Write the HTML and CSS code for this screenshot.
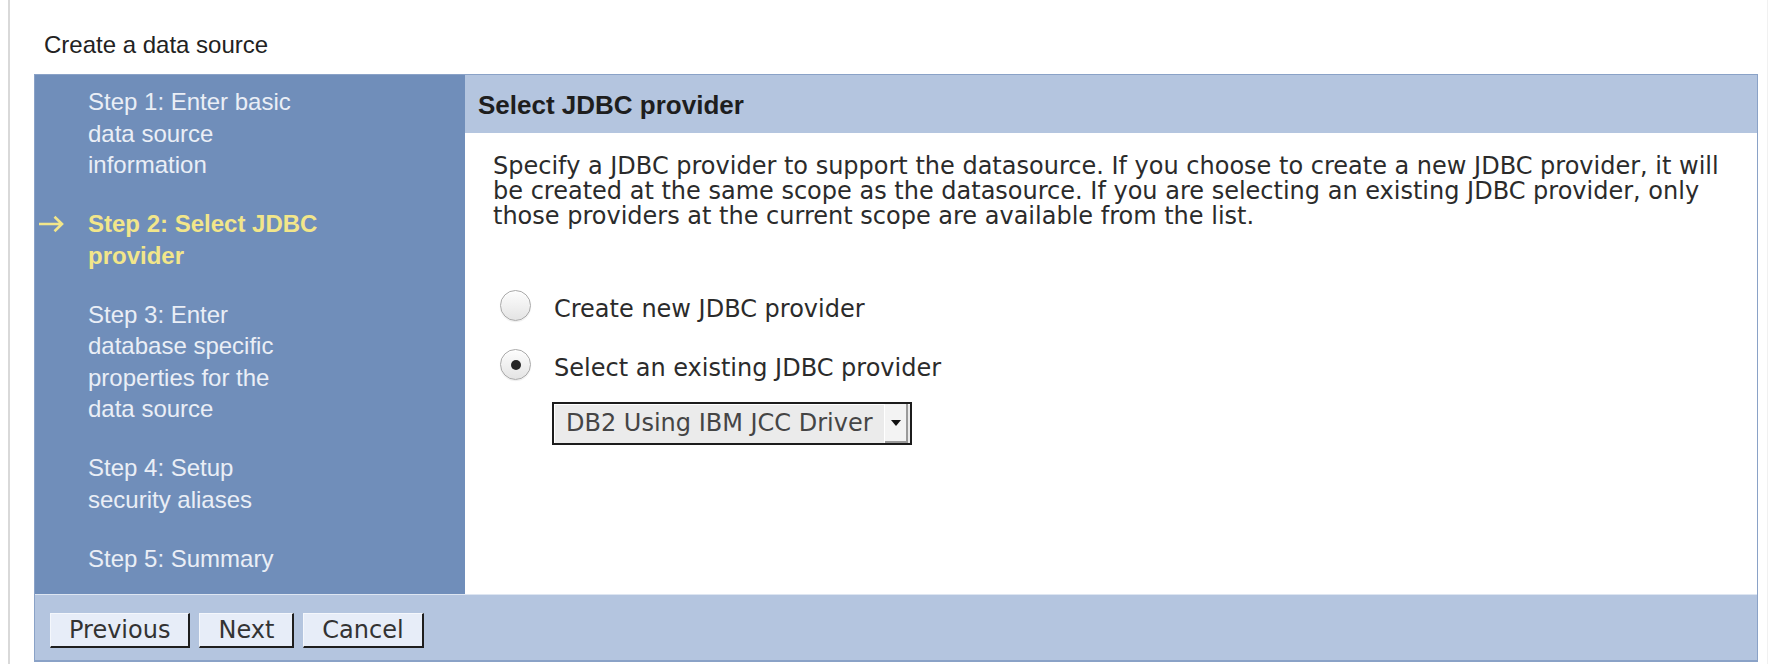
FILE: index.html
```html
<!DOCTYPE html>
<html lang="en">
<head>
<meta charset="utf-8">
<title>Create a data source</title>
<link rel="stylesheet" href="styles.css">
</head>
<body>
<div class="page">
  <div class="title">Create a data source</div>
  <div class="wizard">
    <div class="steps">
      <div class="step">
        <span class="marker"></span>
        <span class="step-text">Step 1: Enter basic data source information</span>
      </div>
      <div class="step active">
        <span class="marker">
          <svg class="arrow" width="26" height="18" viewBox="0 0 26 18"><path d="M1 9H24M16.5 1.8L24 9L16.5 16.2" fill="none" stroke="currentColor" stroke-width="2.6"/></svg>
        </span>
        <span class="step-text">Step 2: Select JDBC provider</span>
      </div>
      <div class="step">
        <span class="marker"></span>
        <span class="step-text">Step 3: Enter database specific properties for the data source</span>
      </div>
      <div class="step">
        <span class="marker"></span>
        <span class="step-text">Step 4: Setup security aliases</span>
      </div>
      <div class="step">
        <span class="marker"></span>
        <span class="step-text">Step 5: Summary</span>
      </div>
    </div>
    <div class="main">
      <div class="main-head">Select JDBC provider</div>
      <div class="main-body">
        <p class="desc">Specify a JDBC provider to support the datasource. If you choose to create a new JDBC provider, it will be created at the same scope as the datasource. If you are selecting an existing JDBC provider, only those providers at the current scope are available from the list.</p>
        <div class="option">
          <span class="radio"></span>
          <span class="option-label">Create new JDBC provider</span>
        </div>
        <div class="option second">
          <span class="radio checked"></span>
          <span class="option-label">Select an existing JDBC provider</span>
        </div>
        <div class="select">
          <span class="select-value">DB2 Using IBM JCC Driver</span>
          <span class="select-btn"><span class="tri"></span></span>
        </div>
      </div>
    </div>
    <div class="footer">
      <button class="btn" type="button">Previous</button>
      <button class="btn" type="button">Next</button>
      <button class="btn" type="button">Cancel</button>
    </div>
  </div>
</div>
</body>
</html>
```
FILE: styles.css
```css
html, body {
  margin: 0;
  padding: 0;
  background: #ffffff;
}

.page {
  margin: 0 8px;
  min-height: 664px;
  box-sizing: border-box;
  border-left: 2px solid #d9d9d9;
  border-right: 1px solid #f1f1f1;
  padding: 31px 9px 0 24px;
}

.title {
  font-family: "Liberation Sans", Arial, sans-serif;
  font-size: 24px;
  line-height: 28px;
  color: #222222;
  padding-left: 10px;
  margin-bottom: 15px;
}

.wizard {
  display: grid;
  grid-template-columns: 430px 1fr;
  border: 1px solid #8aa2c7;
  border-bottom-width: 2px;
}

.steps {
  background: #708eba;
  padding: 11px 0 20px 0;
  font-family: "Liberation Sans", Arial, sans-serif;
  font-size: 24px;
  line-height: 31.5px;
  color: #eaeef6;
}

.step {
  display: grid;
  grid-template-columns: 53px 231px;
  margin-bottom: 27.5px;
}

.step:last-child {
  margin-bottom: 0;
}

.step.active {
  color: #f2e68a;
  font-weight: bold;
}

.marker {
  display: block;
}

.arrow {
  display: block;
  margin: 7px 0 0 3px;
  color: #f2e68a;
}

.main {
  display: flex;
  flex-direction: column;
  background: #ffffff;
}

.main-head {
  background: #b4c5df;
  height: 58px;
  box-sizing: border-box;
  padding: 2px 0 0 13px;
  font-family: "Liberation Sans", Arial, sans-serif;
  font-weight: bold;
  font-size: 26px;
  line-height: 56px;
  color: #1e1e1e;
}

.main-body {
  padding: 21px 14px 0 28px;
  font-family: "DejaVu Sans", sans-serif;
  font-size: 24px;
  color: #2b2b2b;
}

.desc {
  margin: 0 0 57px 0;
  line-height: 25px;
}

.option {
  display: flex;
  align-items: flex-start;
  padding-left: 7px;
}

.option.second {
  margin-top: 16px;
}

.radio {
  width: 31px;
  height: 31px;
  box-sizing: border-box;
  margin-top: 4px;
  margin-right: 23px;
  border-radius: 50%;
  border: 1px solid #a9a9a9;
  background: linear-gradient(#fdfdfd, #e4e4e4);
  box-shadow: inset 0 1px 1px rgba(255, 255, 255, 0.9), 0 1px 1px rgba(0, 0, 0, 0.08);
  display: flex;
  align-items: center;
  justify-content: center;
}

.radio.checked::after {
  content: "";
  width: 10px;
  height: 10px;
  border-radius: 50%;
  background: #262626;
}

.option-label {
  line-height: 40px;
  padding-top: 3px;
}

.select {
  display: flex;
  width: 360px;
  height: 43px;
  box-sizing: border-box;
  margin: 14px 0 0 59px;
  border: 2px solid #1c1c1c;
  background: #ebebeb;
  box-shadow: inset 1px 1px 0 #ffffff;
}

.select-value {
  flex: 1;
  padding-left: 12px;
  line-height: 39px;
  color: #454545;
  white-space: nowrap;
}

.select-btn {
  width: 23px;
  margin: 0 2px 0 0;
  background: #f3f3f3;
  border-left: 1px solid #ffffff;
  box-shadow: inset -2px -2px 0 #9a9a9a;
  display: flex;
  align-items: center;
  justify-content: center;
}

.tri {
  width: 0;
  height: 0;
  border-left: 5px solid transparent;
  border-right: 5px solid transparent;
  border-top: 6px solid #111111;
  margin: 0 2px 2px 0;
}

.footer {
  grid-column: 1 / -1;
  display: flex;
  gap: 9px;
  background: #b4c5df;
  border-top: 1px solid #dde5f1;
  padding: 18px 15px 12px 15px;
}

.btn {
  height: 35px;
  box-sizing: border-box;
  margin: 0;
  padding: 0 18px 0 18px;
  font-family: "DejaVu Sans", sans-serif;
  font-size: 24px;
  line-height: 31px;
  color: #333333;
  background: #e7edf8;
  border-top: 1px solid #f4f7fc;
  border-left: 1px solid #f4f7fc;
  border-right: 2px solid #1e1e1e;
  border-bottom: 2px solid #1e1e1e;
  border-radius: 0;
}
```
